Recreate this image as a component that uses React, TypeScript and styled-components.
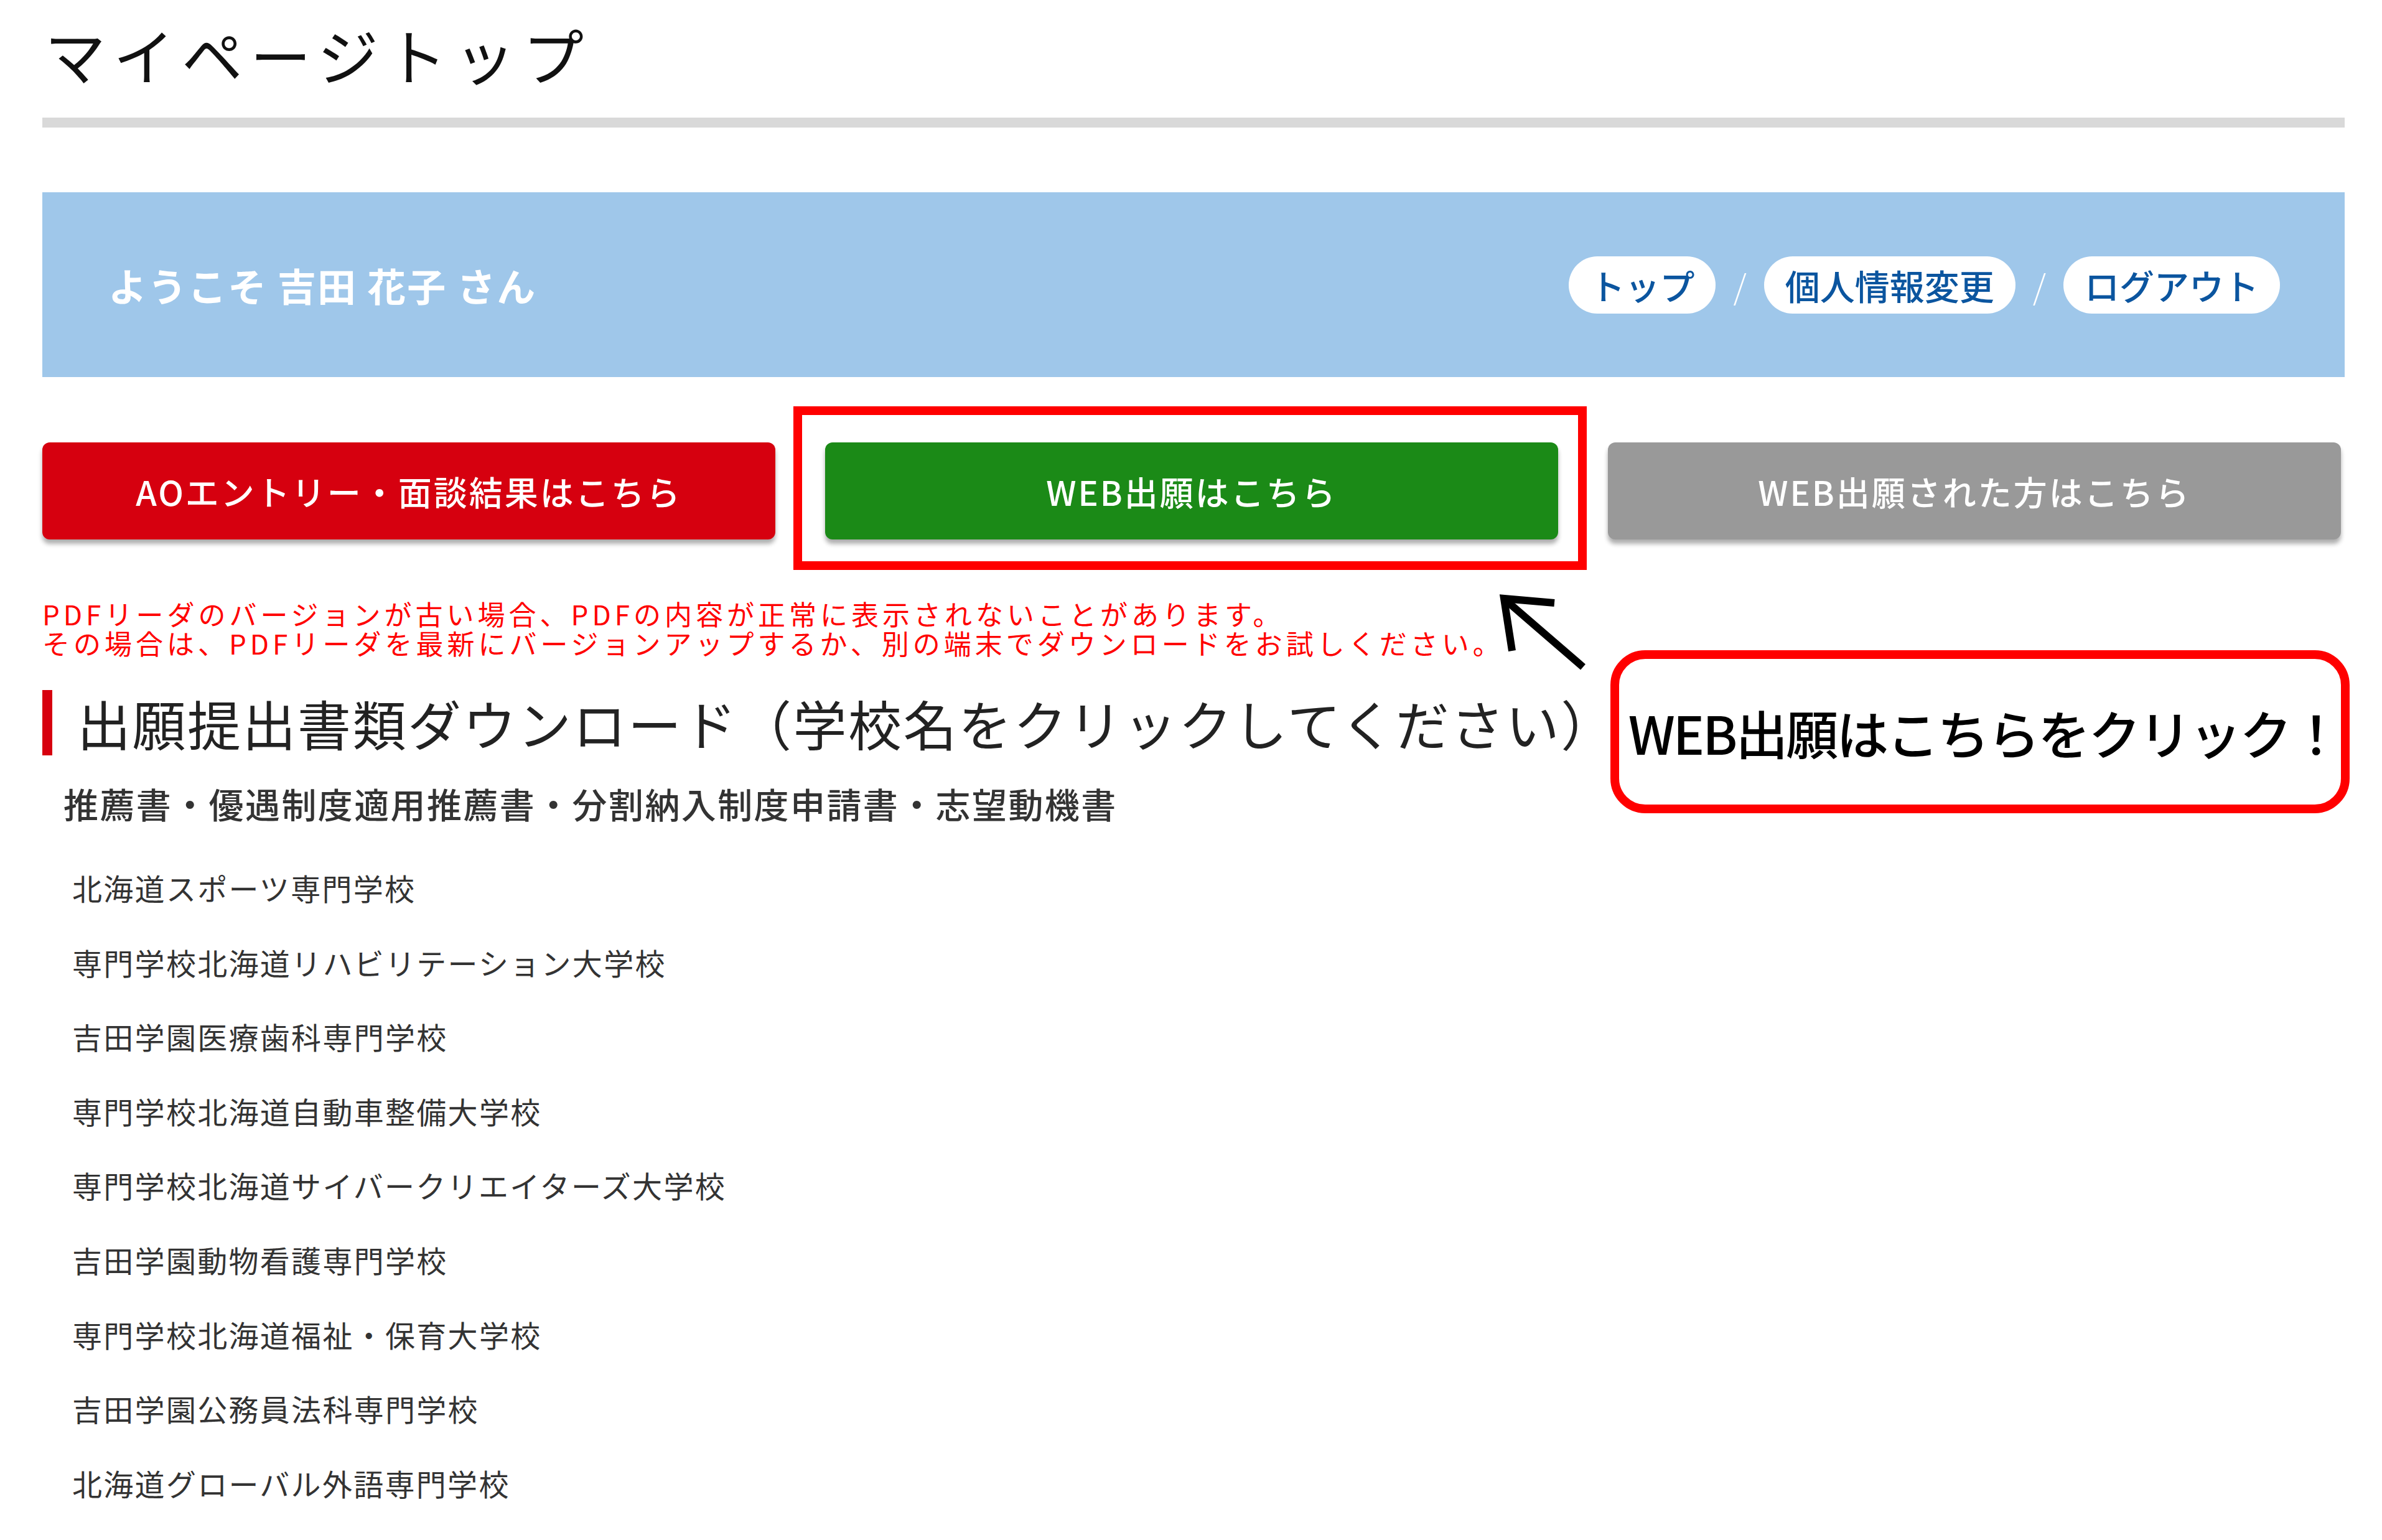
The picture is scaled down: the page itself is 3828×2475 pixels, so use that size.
import React from "react";
import styled, { createGlobalStyle } from "styled-components";

const GlobalStyle = createGlobalStyle`
  html, body {
    margin: 0;
    padding: 0;
    background: #ffffff;
  }
  body {
    font-family: "Noto Sans CJK JP", "Noto Sans", sans-serif;
    color: #222222;
  }
  * {
    box-sizing: border-box;
  }
`;

const Page = styled.div`
  position: relative;
  width: 3700px;
  margin-left: 68px;
  padding-bottom: 60px;
`;

const PageTitle = styled.h1`
  margin: 0;
  padding: 37px 0 54px 4px;
  font-size: 98px;
  line-height: 1;
  font-weight: 400;
  letter-spacing: 12px;
  color: #111111;
  border-bottom: 16px solid #d9d9d9;
`;

const WelcomeBar = styled.div`
  margin-top: 104px;
  height: 297px;
  background: #9fc7ea;
  display: flex;
  align-items: center;
  justify-content: space-between;
  padding: 0 104px 0 106px;
`;

const Welcome = styled.p`
  margin: 0;
  color: #ffffff;
  font-size: 62px;
  font-weight: 700;
  letter-spacing: 2px;
  line-height: 1;
`;

const UserNav = styled.nav`
  display: flex;
  align-items: center;
`;

const NavPill = styled.a`
  display: flex;
  align-items: center;
  height: 92px;
  padding: 0 34px;
  border-radius: 46px;
  background: #ffffff;
  color: #0b559f;
  font-size: 56px;
  font-weight: 500;
  line-height: 1;
  text-decoration: none;
`;

const NavSlash = styled.span`
  margin: 0 28px;
  color: #ffffff;
  font-size: 54px;
  font-weight: 300;
  line-height: 1;
`;

const ButtonRow = styled.div`
  margin-top: 105px;
  display: grid;
  grid-template-columns: repeat(3, 1178px);
  column-gap: 80px;
`;

const ButtonSlot = styled.div`
  position: relative;
`;

const ActionButton = styled.a<{ $bg: string }>`
  display: flex;
  align-items: center;
  justify-content: center;
  height: 156px;
  border-radius: 12px;
  background: ${(p) => p.$bg};
  color: #ffffff;
  font-size: 54px;
  font-weight: 500;
  letter-spacing: 3px;
  text-decoration: none;
  box-shadow: 0 7px 7px rgba(0, 0, 0, 0.32);
`;

/* red marker frame drawn around the highlighted button */
const HighlightFrame = styled.div`
  position: absolute;
  top: -58px;
  left: -51px;
  right: -46px;
  bottom: -49px;
  border: 14px solid #ff0000;
  pointer-events: none;
`;

const Notice = styled.div`
  margin-top: 96px;
  color: #ff0000;
  font-size: 44px;
  letter-spacing: 6px;
  font-weight: 400;
`;

const NoticeLine = styled.p`
  margin: 0;
  height: 47px;
  line-height: 47px;
  white-space: nowrap;
`;

const SectionHeading = styled.h2`
  margin: 52px 0 0 0;
  border-left: 16px solid #d7000f;
  padding-left: 40px;
  height: 105px;
  display: flex;
  align-items: center;
  font-size: 86px;
  font-weight: 400;
  letter-spacing: 2.5px;
  color: #222222;
`;

const DocNames = styled.p`
  margin: 42px 0 0 34px;
  font-size: 56px;
  line-height: 70px;
  font-weight: 500;
  letter-spacing: 2.4px;
  color: #333333;
`;

const SchoolList = styled.ul`
  list-style: none;
  margin: 41px 0 0 0;
  padding: 0 0 0 48px;
`;

const SchoolItem = styled.li`
  line-height: 119.6px;
  font-size: 48px;
  letter-spacing: 2.3px;
  color: #333333;
`;

const SchoolLink = styled.a`
  color: inherit;
  text-decoration: none;
`;

/* callout bubble and pointer arrow over the page */
const Callout = styled.div`
  position: absolute;
  left: 2520px;
  top: 1045px;
  width: 1188px;
  height: 262px;
  border: 14px solid #ff0000;
  border-radius: 56px;
  background: #ffffff;
  display: flex;
  align-items: center;
  justify-content: center;
  padding-left: 14px;
  font-size: 84px;
  font-weight: 500;
  letter-spacing: -3px;
  color: #000000;
  white-space: nowrap;
`;

const PointerArrow = styled.svg`
  position: absolute;
  left: 2327px;
  top: 945px;
  width: 240px;
  height: 140px;
  overflow: visible;
`;

const schools = [
  "北海道スポーツ専門学校",
  "専門学校北海道リハビリテーション大学校",
  "吉田学園医療歯科専門学校",
  "専門学校北海道自動車整備大学校",
  "専門学校北海道サイバークリエイターズ大学校",
  "吉田学園動物看護専門学校",
  "専門学校北海道福祉・保育大学校",
  "吉田学園公務員法科専門学校",
  "北海道グローバル外語専門学校",
];

export default function App() {
  return (
    <>
      <GlobalStyle />
      <Page>
        <PageTitle>マイページトップ</PageTitle>

        <WelcomeBar>
          <Welcome>ようこそ 吉田 花子 さん</Welcome>
          <UserNav>
            <NavPill href="#">トップ</NavPill>
            <NavSlash>/</NavSlash>
            <NavPill href="#">個人情報変更</NavPill>
            <NavSlash>/</NavSlash>
            <NavPill href="#">ログアウト</NavPill>
          </UserNav>
        </WelcomeBar>

        <ButtonRow>
          <ButtonSlot>
            <ActionButton href="#" $bg="#d6000f">
              AOエントリー・面談結果はこちら
            </ActionButton>
          </ButtonSlot>
          <ButtonSlot>
            <ActionButton href="#" $bg="#1b8a17">
              WEB出願はこちら
            </ActionButton>
            <HighlightFrame />
          </ButtonSlot>
          <ButtonSlot>
            <ActionButton href="#" $bg="#999999">
              WEB出願された方はこちら
            </ActionButton>
          </ButtonSlot>
        </ButtonRow>

        <Notice>
          <NoticeLine>PDFリーダのバージョンが古い場合、PDFの内容が正常に表示されないことがあります。</NoticeLine>
          <NoticeLine>その場合は、PDFリーダを最新にバージョンアップするか、別の端末でダウンロードをお試しください。</NoticeLine>
        </Notice>

        <SectionHeading>出願提出書類ダウンロード（学校名をクリックしてください）</SectionHeading>
        <DocNames>推薦書・優遇制度適用推薦書・分割納入制度申請書・志望動機書</DocNames>

        <SchoolList>
          {schools.map((name) => (
            <SchoolItem key={name}>
              <SchoolLink href="#">{name}</SchoolLink>
            </SchoolItem>
          ))}
        </SchoolList>

        <PointerArrow viewBox="2395 945 240 140">
          <polyline
            points="2430,1046 2417,962 2498,969"
            fill="none"
            stroke="#000000"
            strokeWidth="12"
            strokeLinejoin="miter"
          />
          <line x1="2419" y1="964" x2="2544" y2="1072" stroke="#000000" strokeWidth="12" />
        </PointerArrow>

        <Callout>WEB出願はこちらをクリック！</Callout>
      </Page>
    </>
  );
}
